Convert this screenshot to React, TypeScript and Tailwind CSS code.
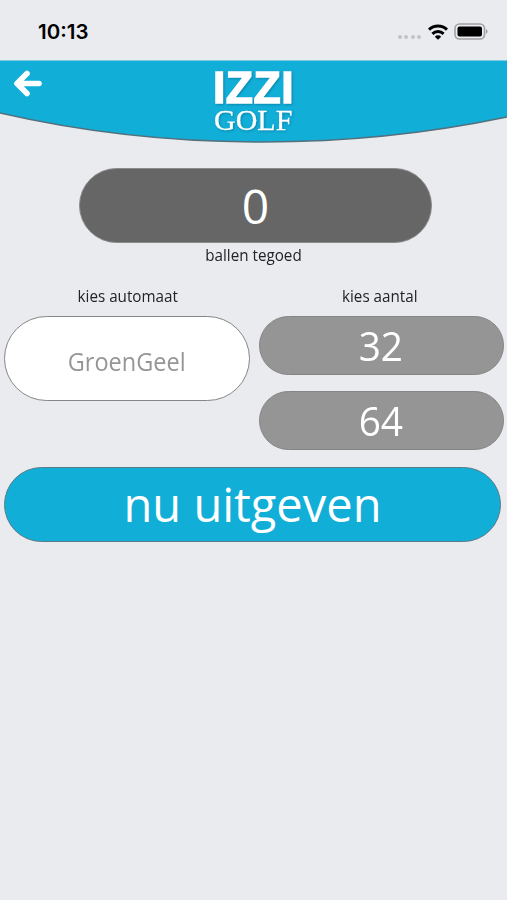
import type { ReactNode } from 'react';

const amounts = [32, 64];

const StatusBar = () => (
  <div className="h-15 pl-[38px] pr-[18px] flex items-center justify-between">
    <span className="mt-1 font-['Inter'] text-[20.5px] leading-6 font-semibold text-black">10:13</span>
    <div className="mt-[3px] flex items-center">
      <div className="mt-[11px] mr-[7px] flex gap-[2.4px]">
        {[0, 1, 2, 3].map((dot) => (
          <span key={dot} className="size-1 rounded-full bg-[#c2c3c6]" />
        ))}
      </div>
      <svg width="20" height="16" viewBox="0 0 20 16" fill="none" stroke="#000" strokeWidth="3">
        <path d="M1 5.6a13 13 0 0 1 18 0" />
        <path d="M4.4 9.8a8.1 8.1 0 0 1 11.2 0" />
        <path d="M10 15.8 6.8 12.7a4.5 4.5 0 0 1 6.4 0z" fill="#000" stroke="none" />
      </svg>
      <svg className="ml-[6px]" width="35" height="17" viewBox="0 0 35 17">
        <rect x="1" y="1" width="29.5" height="15" rx="4.5" fill="none" stroke="#a0a1a3" strokeWidth="1.6" />
        <rect x="3.5" y="3.5" width="24.5" height="10" rx="2" fill="#000" />
        <path d="M32 6q3 2.5 0 5z" fill="#939496" />
      </svg>
    </div>
  </div>
);

const Header = () => (
  <svg className="block w-full" height="88" viewBox="0 0 507 88">
    <path d="M0 .5H507V57C345 91 165 91 0 53Z" fill="#11aed8" />
    <path d="M0 53C165 91 345 91 507 57" fill="none" stroke="#52717d" strokeWidth="1.4" />
    <path d="M27 13.5 17 23.5 27 33.5M18 23.5H39" fill="none" stroke="#fff" strokeWidth="5.6" strokeLinecap="round" strokeLinejoin="round" />
    <g fill="#fff" className="drop-shadow-[1px_1px_1px_rgba(0,60,90,0.35)]">
      <text x="213" y="42.8" fontFamily="Liberation Sans, sans-serif" fontWeight="700" fontSize="44.5" stroke="#fff" strokeWidth="1.5" letterSpacing="0.5">IZZI</text>
      <text x="214" y="69.5" fontFamily="Liberation Serif, serif" fontSize="30" stroke="#fff" strokeWidth="0.3">GOLF</text>
    </g>
  </svg>
);

const Label = ({ children }: { children: ReactNode }) => (
  <p className="text-center text-[16px] leading-5 text-[#222326] scale-x-95">{children}</p>
);

const App = () => {
  return (
    <div className="min-h-screen bg-[#eaebef] font-['Open_Sans',sans-serif]">
      <StatusBar />
      <Header />
      <main className="pt-5">
        <div className="ml-[79px] w-[353px] h-[75px] rounded-full border border-[#8a8a8a] bg-[#666] flex items-center justify-center text-[48px] leading-none text-white">
          <span>0</span>
        </div>
        <div className="mt-[2px]">
          <Label>ballen tegoed</Label>
        </div>
        <div className="mt-[21px] pl-1 pr-[3px] grid grid-cols-2 gap-[9px]">
          <div>
            <div className="pl-[2px]">
              <Label>kies automaat</Label>
            </div>
            <button className="mt-[10px] w-full h-[85px] rounded-full border border-[#868686] bg-white pt-[6px] text-[25px] text-[#969696]">
              <span className="inline-block scale-x-[0.94]">GroenGeel</span>
            </button>
          </div>
          <div>
            <div className="pr-[4px]">
              <Label>kies aantal</Label>
            </div>
            <div className="mt-[10px] flex flex-col gap-4">
              {amounts.map((amount) => (
                <button key={amount} className="h-[59px] rounded-full border border-[#858585] bg-[#959595] pt-px text-[40px] leading-none text-white">
                  <span className="inline-block scale-x-[0.97]">{amount}</span>
                </button>
              ))}
            </div>
          </div>
        </div>
        <button className="mt-[17px] ml-1 w-[497px] h-[75px] rounded-full border border-[#5c7c88] bg-[#11aed8] flex items-center justify-center text-[47px] leading-none text-white">
          <span>nu uitgeven</span>
        </button>
      </main>
    </div>
  );
};

export default App;
